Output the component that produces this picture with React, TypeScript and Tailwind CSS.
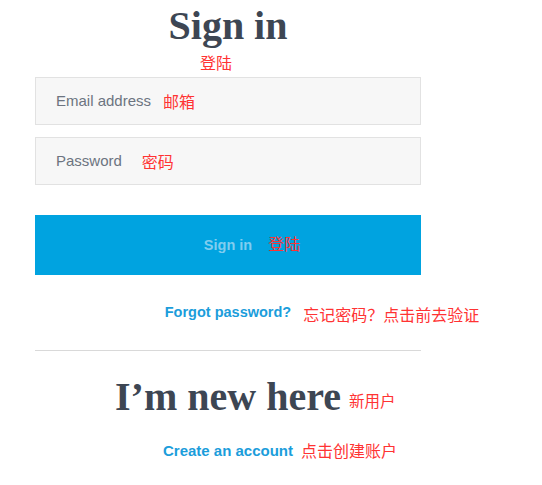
import React from 'react';

const sans = "font-['Liberation_Sans',Arial,sans-serif]";
const serif = "font-['Liberation_Serif','Times_New_Roman',serif]";
const cjk = "font-['Noto_Sans_CJK_SC',sans-serif] text-[#ff3333]";

export default function App() {
  return (
    <div className="min-h-[485px] bg-white">
      <div className="ml-[35px] w-[386px] flex flex-col">
        <h1 className={`${serif} pt-[2px] text-center text-[40px] leading-[48px] font-bold text-[#3d4653]`}>
          Sign in
        </h1>
        <div className={`${cjk} mt-[2px] pl-[165px] text-[16px] leading-[20px]`}>登陆</div>

        <div className="mt-[5px] flex h-[48px] items-center border border-[#e2e2e2] bg-[#f7f7f7] pl-5">
          <span className={`${sans} text-[15px] text-[#6c7480]`}>Email address</span>
          <span className={`${cjk} ml-[12px] text-[16px] leading-[20px]`}>邮箱</span>
        </div>
        <div className="mt-[12px] flex h-[48px] items-center border border-[#e2e2e2] bg-[#f7f7f7] pl-5">
          <span className={`${sans} text-[15px] text-[#6c7480]`}>Password</span>
          <span className={`${cjk} ml-[20px] text-[16px] leading-[20px]`}>密码</span>
        </div>

        <button className="mt-[30px] flex h-[60px] items-center justify-center bg-[#00a3e0] pb-[2px]">
          <span className="relative">
            <span className={`${sans} text-[14.5px] font-bold text-[#80cdef]`}>Sign in</span>
            <span className={`${cjk} absolute left-[calc(100%+16px)] top-[1px] whitespace-nowrap text-[16px] leading-[20px]`}>
              登陆
            </span>
          </span>
        </button>

        <div className="mt-[26px] flex justify-center leading-[20px]">
          <span className="relative">
            <a className={`${sans} text-[14.5px] font-bold text-[#1b9ddb]`}>Forgot password?</a>
            <span className={`${cjk} absolute left-[calc(100%+12px)] top-[3px] whitespace-nowrap text-[16px] leading-[20px]`}>
              忘记密码？点击前去验证
            </span>
          </span>
        </div>

        <div className="mt-[28px] h-px bg-[#d9d9d9]" />

        <div className="mt-[22px] flex justify-center">
          <span className="relative">
            <h2 className={`${serif} text-[40px] leading-[48px] font-bold text-[#3d4653]`}>I’m new here</h2>
            <span className={`${cjk} absolute left-[calc(100%+8px)] top-[17px] whitespace-nowrap text-[15.5px] leading-[20px]`}>
              新用户
            </span>
          </span>
        </div>

        <div className="mt-[19px] flex justify-center leading-[20px]">
          <span className="relative">
            <a className={`${sans} text-[15px] font-bold text-[#1b9ddb]`}>Create an account</a>
            <span className={`${cjk} absolute left-[calc(100%+8px)] top-[0px] whitespace-nowrap text-[16px] leading-[20px]`}>
              点击创建账户
            </span>
          </span>
        </div>
      </div>
    </div>
  );
}
